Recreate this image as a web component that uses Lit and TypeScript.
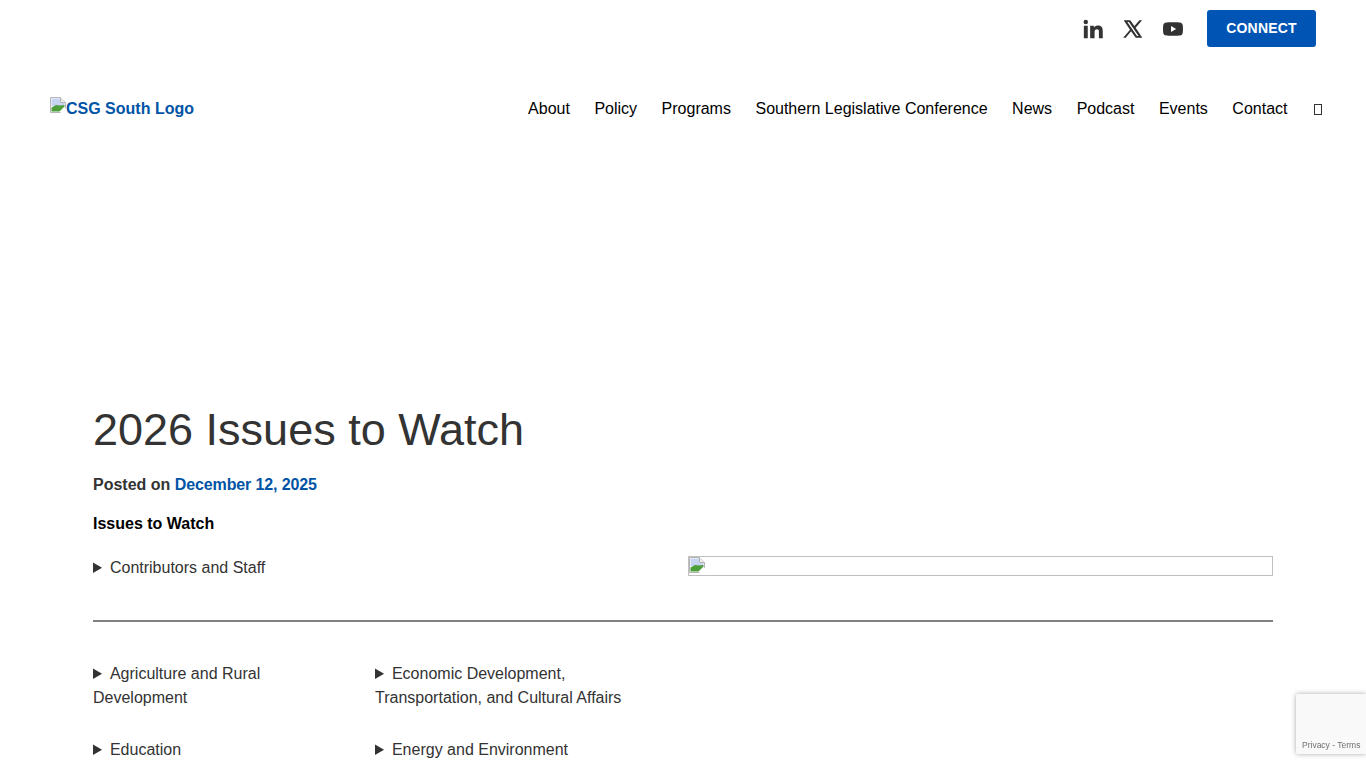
import { LitElement, html, css, svg } from "lit";
import { customElement } from "lit/decorators.js";

const broken = svg`<svg class="bi" width="16" height="16" viewBox="0 0 16 16" aria-hidden="true">
<path d="M0.5 0.5H10.5L15.5 5.5V15.5H0.5Z" fill="#fff" stroke="#b5b5b5"/>
<path d="M1.5 1.5H10V6H14.5V9H1.5Z" fill="#c6d4f2"/>
<path d="M1.5 14.5V10.5L6 8L10 8.5L14.5 8V9.5L9.5 14.5Z" fill="#4f9e3c"/>
<path d="M10.5 .5V5.5H15.5" fill="#eee" stroke="#b5b5b5"/>
<path d="M10 16L16 10.5V16Z" fill="#fff"/>
</svg>`;

@customElement("app-root")
export class AppRoot extends LitElement {
  static styles = css`
    :host {
      display: block;
      height: 768px;
      overflow: hidden;
      background: #fff;
      font-family: "Liberation Sans", Arial, sans-serif;
      font-size: 16px;
      line-height: 24px;
      color: #333;
    }
    .top {
      display: flex;
      justify-content: flex-end;
      align-items: center;
      height: 37px;
      padding: 10px 50px 0 0;
    }
    .social { display: flex; align-items: center; gap: 20px; margin-right: 24px; }
    .social svg { display: block; width: 20px; height: 20px; fill: #333; }
    .connect {
      display: block;
      width: 109px;
      height: 37px;
      line-height: 36px;
      text-align: center;
      background: #0054b4;
      color: #fff;
      font-weight: 700;
      font-size: 14px;
      border-radius: 3px;
      letter-spacing: 0.2px;
    }
    .head {
      display: flex;
      justify-content: space-between;
      align-items: center;
      height: 24px;
      margin-top: 50px;
      padding: 0 44px 0 50px;
    }
    .logo {
      display: flex;
      align-items: flex-start;
      font-weight: 700;
      color: #0054a6;
      line-height: 24px;
      height: 24px;
    }
    nav { display: flex; align-items: center; gap: 24.5px; color: #000; }
    .tofu {
      display: block;
      box-sizing: border-box;
      width: 8px;
      height: 11px;
      border: 1px solid #333;
      margin-left: 2px;
    }
    main { padding: 281px 93px 0; }
    h1 {
      margin: 0;
      font-size: 45px;
      line-height: 55px;
      font-weight: 400;
      color: #333;
    }
    .posted { margin: 16px 0 0; font-weight: 700; color: #333; }
    .posted a { color: #0054a6; letter-spacing: -0.12px; }
    .label { margin: 15px 0 0; font-weight: 700; color: #000; }
    .split {
      display: grid;
      grid-template-columns: 585px 585px;
      gap: 10px;
      margin-top: 20px;
      align-items: start;
    }
    details { color: #333; }
    summary { cursor: pointer; }
    .imgbox {
      box-sizing: border-box;
      height: 20px;
      border: 1px solid #c0c0c0;
      overflow: hidden;
    }
    .imgbox .bi { display: block; }
    hr {
      border: 0;
      height: 2px;
      background: #808080;
      margin: 40px 0 0;
    }
    .topics {
      display: grid;
      grid-template-columns: 262px 262px;
      column-gap: 20px;
      row-gap: 28px;
      margin-top: 40px;
    }
    .badge {
      position: fixed;
      right: 0;
      top: 694px;
      width: 70px;
      height: 60px;
      background: #f9f9f9;
      box-shadow: 0 0 5px rgba(120, 120, 120, 0.65);
      border-radius: 2px 0 0 2px;
      box-sizing: border-box;
      padding: 46px 0 0 6px;
      font-size: 8.5px;
      line-height: 10px;
      color: #6f6f6f;
      white-space: nowrap;
    }
  `;

  private topic(t: string) {
    return html`<details><summary>${t}</summary></details>`;
  }

  render() {
    return html`
      <div class="top">
        <div class="social">
          <svg viewBox="0 0 24 24" aria-label="LinkedIn"><path d="M1 8.2h4.7V23H1zM3.35 1a2.65 2.65 0 1 1 0 5.3 2.65 2.65 0 0 1 0-5.3zM8.6 8.2h4.4v2.1h.1c.7-1.2 2.3-2.5 4.7-2.5 5 0 5.9 3.1 5.9 7.2V23h-4.6v-7c0-1.7 0-3.8-2.4-3.8s-2.8 1.8-2.8 3.7V23H8.6z"/></svg>
          <svg viewBox="0 0 24 24" aria-label="X"><path fill-rule="evenodd" d="M.8 1.6h7.9l5 6.9 6-6.9h3.2l-7.7 9L23.2 22.4h-7.9l-5.6-7.6L3.2 22.4H.2l8.2-9.6zM5.2 3.5l11.6 17h1.9L7.1 3.5z"/></svg>
          <svg viewBox="0 0 24 24" aria-label="YouTube"><path fill-rule="evenodd" d="M23.5 6.7a3 3 0 0 0-2.1-2.1C19.5 4 12 4 12 4s-7.5 0-9.4.6A3 3 0 0 0 .5 6.7C0 8.6 0 12 0 12s0 3.4.5 5.3a3 3 0 0 0 2.1 2.1c1.9.6 9.4.6 9.4.6s7.5 0 9.4-.6a3 3 0 0 0 2.1-2.1c.5-1.9.5-5.3.5-5.3s0-3.4-.5-5.3zM9.6 15.5v-7l6.2 3.5z"/></svg>
        </div>
        <a class="connect">CONNECT</a>
      </div>
      <header class="head">
        <a class="logo">${broken}<span>CSG South Logo</span></a>
        <nav>
          <a>About</a><a>Policy</a><a>Programs</a><a>Southern Legislative Conference</a>
          <a>News</a><a>Podcast</a><a>Events</a><a>Contact</a><span class="tofu"></span>
        </nav>
      </header>
      <main>
        <h1>2026 Issues to Watch</h1>
        <p class="posted">Posted on <a>December 12, 2025</a></p>
        <p class="label">Issues to Watch</p>
        <div class="split">
          ${this.topic("Contributors and Staff")}
          <div class="imgbox">${broken}</div>
        </div>
        <hr />
        <div class="topics">
          ${this.topic("Agriculture and Rural Development")}
          ${this.topic("Economic Development, Transportation, and Cultural Affairs")}
          ${this.topic("Education")}
          ${this.topic("Energy and Environment")}
        </div>
      </main>
      <div class="badge">Privacy - Terms</div>
    `;
  }
}
